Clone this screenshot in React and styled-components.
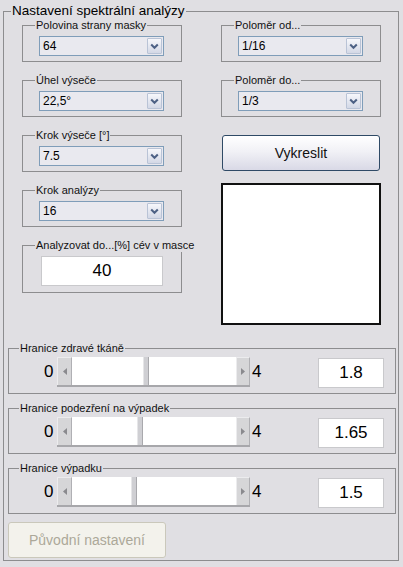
import React from "react";
import styled, { createGlobalStyle } from "styled-components";

const BG = "#e0dfe3";

const Global = createGlobalStyle`
  html, body { margin: 0; padding: 0; background: ${BG}; }
  body { font-family: "Liberation Sans", Arial, sans-serif; color: #000; }
  #root { width: 403px; height: 567px; overflow: hidden; }
`;

const Page = styled.div`
  width: 403px;
  height: 567px;
  background: ${BG};
  padding-top: 11px;
  padding-left: 3px;
  box-sizing: border-box;
`;

const Frame = styled.div`
  position: relative;
  width: 396px;
  box-sizing: border-box;
  border: 1px solid #8d8d8f;
  padding: 13px 2px 2px 4px;
`;

const Title = styled.span`
  position: absolute;
  top: -9px;
  left: 7px;
  padding: 0 1px;
  background: ${BG};
  font-size: 13.5px;
  line-height: 16px;
  color: #000;
`;

const Top = styled.div`
  display: grid;
  grid-template-columns: 160px 160px;
  column-gap: 39px;
  padding-left: 14px;
  height: 300px;
`;

const Column = styled.div`
  display: flex;
  flex-direction: column;
  gap: ${(p) => p.$gap || 18}px;
`;

const Group = styled.div`
  position: relative;
  box-sizing: border-box;
  height: ${(p) => p.$h || 37}px;
  border: 1px solid #8d8d8f;
  padding: ${(p) => p.$pad || "10px 16px 0 16px"};
`;

const Legend = styled.span`
  position: absolute;
  top: -7px;
  left: ${(p) => p.$left || 12}px;
  padding: 0 1px;
  background: ${BG};
  font-size: 11px;
  line-height: 13px;
  white-space: nowrap;
  color: #111;
`;

const Combo = styled.div`
  box-sizing: border-box;
  width: 125px;
  height: 20px;
  border: 1px solid #7f9db9;
  background: #e9e9ef;
  display: flex;
  align-items: center;
  justify-content: space-between;
  padding: 0 1px 0 3px;
  font-size: 12px;
`;

const ArrowBtn = styled.div`
  box-sizing: border-box;
  width: 15px;
  height: 16px;
  border: 1px solid #b9c3d6;
  border-radius: 1px;
  background: linear-gradient(#f6f7fb, #d3d8e6);
  display: flex;
  align-items: center;
  justify-content: center;
`;

const Field = styled.div`
  box-sizing: border-box;
  width: 122px;
  height: 30px;
  margin-left: 2px;
  background: #fff;
  border: 1px solid #c9c9cc;
  display: flex;
  align-items: center;
  justify-content: center;
  font-size: 17px;
`;

const DrawButton = styled.button`
  box-sizing: border-box;
  width: 158px;
  height: 36px;
  margin-left: 1px;
  border: 1px solid #2f4a66;
  border-radius: 3px;
  background: linear-gradient(#ffffff 0%, #f1f1f6 45%, #d9d9e6 100%);
  font-family: inherit;
  font-size: 14px;
  color: #111;
  padding: 0;
`;

const Canvas = styled.div`
  box-sizing: border-box;
  width: 160px;
  height: 142px;
  margin-top: -6px;
  background: #fff;
  border: 2px solid #111;
`;

const Bottom = styled.div`
  display: flex;
  flex-direction: column;
  gap: 14px;
  margin-top: 23px;
`;

const SliderGroup = styled.div`
  position: relative;
  box-sizing: border-box;
  width: 388px;
  height: 46px;
  border: 1px solid #8d8d8f;
  display: flex;
  align-items: flex-start;
  padding: 8px 11px 0 35px;
`;

const EndLabel = styled.span`
  font-size: 17px;
  line-height: 30px;
  width: ${(p) => p.$w}px;
  margin-left: ${(p) => p.$ml || 0}px;
`;

const Slider = styled.div`
  display: flex;
  width: 193px;
  height: 30px;
  box-sizing: border-box;
  border-bottom: 2px solid #a7a7ab;
`;

const StepBtn = styled.div`
  box-sizing: border-box;
  width: ${(p) => p.$w}px;
  height: 28px;
  background: #d6d6d8;
  border-left: 1px solid #ececee;
  border-top: 1px solid #ececee;
  border-right: 1px solid #b0b0b4;
  display: flex;
  align-items: center;
  justify-content: center;
`;

const Trough = styled.div`
  flex: 1;
  display: flex;
  height: 28px;
  background: #fff;
`;

const Thumb = styled.div`
  width: 6px;
  height: 28px;
  box-sizing: border-box;
  background: #cfcfd3;
  border-left: 1px solid #e6e6e8;
  border-right: 1px solid #a9a9ad;
`;

const ValueBox = styled.div`
  box-sizing: border-box;
  width: 66px;
  height: 30px;
  margin-left: auto;
  margin-top: 1px;
  background: #fff;
  border: 1px solid #c9c9cc;
  display: flex;
  align-items: center;
  justify-content: center;
  font-size: 17px;
`;

const ResetButton = styled.button`
  box-sizing: border-box;
  width: 158px;
  height: 36px;
  margin-top: 8px;
  border: 1px solid #cac8bb;
  border-radius: 3px;
  background: #f3f2ec;
  color: #aca899;
  font-family: inherit;
  font-size: 14px;
  padding: 0;
`;

const Chevron = () => (
  <svg width="9" height="7" viewBox="0 0 9 7">
    <path d="M1.2 1.5 L4.5 4.8 L7.8 1.5" fill="none" stroke="#4d6185" strokeWidth="2" />
  </svg>
);

const Tri = ({ dir }) => (
  <svg width="4" height="7" viewBox="0 0 4 7">
    {dir === "left" ? (
      <path d="M4 0 L0 3.5 L4 7 Z" fill="#8a8a8e" />
    ) : (
      <path d="M0 0 L4 3.5 L0 7 Z" fill="#8a8a8e" />
    )}
  </svg>
);

const ComboGroup = ({ label, value }) => (
  <Group>
    <Legend>{label}</Legend>
    <Combo>
      <span>{value}</span>
      <ArrowBtn>
        <Chevron />
      </ArrowBtn>
    </Combo>
  </Group>
);

const SliderRow = ({ label, value }) => {
  const track = 158;
  const left = Math.round((parseFloat(value) / 4) * track);
  return (
    <SliderGroup>
      <Legend $left={10}>{label}</Legend>
      <EndLabel $w={13}>0</EndLabel>
      <Slider>
        <StepBtn $w={15}>
          <Tri dir="left" />
        </StepBtn>
        <Trough>
          <div style={{ width: left }} />
          <Thumb />
        </Trough>
        <StepBtn $w={14}>
          <Tri dir="right" />
        </StepBtn>
      </Slider>
      <EndLabel $w={12} $ml={2}>4</EndLabel>
      <ValueBox>{value}</ValueBox>
    </SliderGroup>
  );
};

export default function App() {
  return (
    <Page>
      <Global />
      <Frame>
        <Title>Nastavení spektrální analýzy</Title>
        <Top>
          <Column>
            <ComboGroup label="Polovina strany masky" value="64" />
            <ComboGroup label="Úhel výseče" value="22,5°" />
            <ComboGroup label="Krok výseče [°]" value="7.5" />
            <ComboGroup label="Krok analýzy" value="16" />
            <Group $h={48}>
              <Legend>Analyzovat do...[%] cév v masce</Legend>
              <Field>40</Field>
            </Group>
          </Column>
          <Column>
            <ComboGroup label="Poloměr od..." value="1/16" />
            <ComboGroup label="Poloměr do..." value="1/3" />
            <DrawButton>Vykreslit</DrawButton>
            <Canvas />
          </Column>
        </Top>
        <Bottom>
          <SliderRow label="Hranice zdravé tkáně" value="1.8" />
          <SliderRow label="Hranice podezření na výpadek" value="1.65" />
          <SliderRow label="Hranice výpadku" value="1.5" />
        </Bottom>
        <ResetButton disabled>Původní nastavení</ResetButton>
      </Frame>
    </Page>
  );
}
